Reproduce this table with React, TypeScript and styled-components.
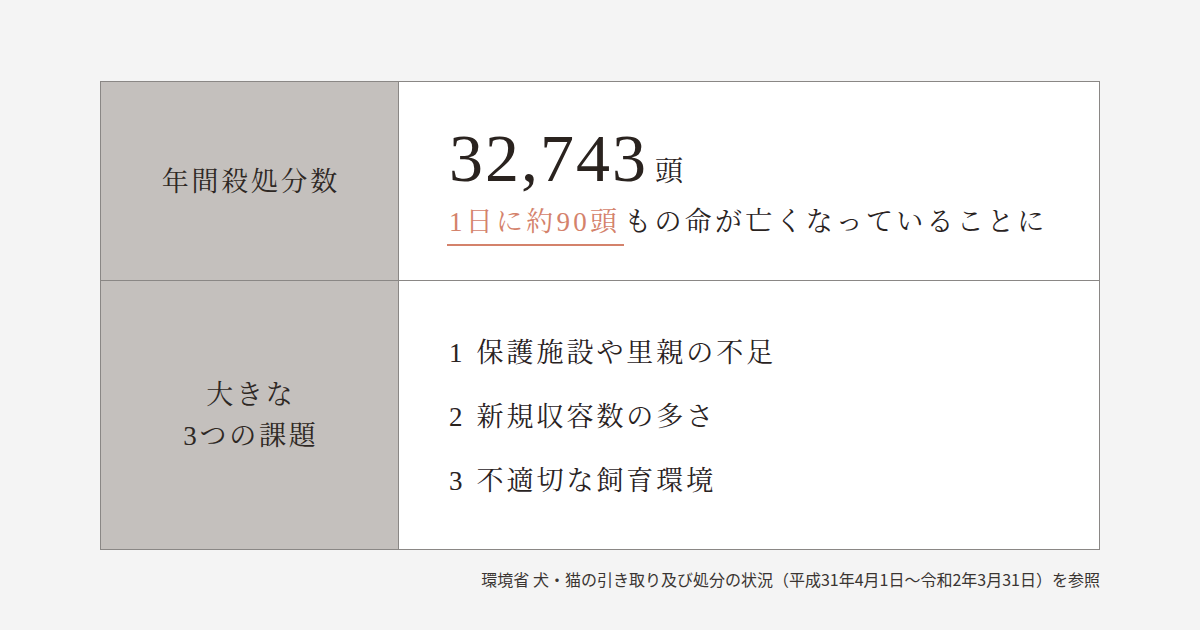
import React from 'react';
import styled, {createGlobalStyle} from 'styled-components';

const GlobalStyle = createGlobalStyle`
    html, body {
        margin: 0;
        padding: 0;
        background: #f4f4f4;
    }
`;

const serif = `"Liberation Serif", "Noto Serif CJK JP", "Noto Sans CJK JP", serif`;

const issues = [
    '保護施設や里親の不足',
    '新規収容数の多さ',
    '不適切な飼育環境',
];

const App = () => {
    return (
        <>
            <GlobalStyle/>
            <Page>
                <Table>
                    <HeadCell>
                        <HeadText>{'年間殺処分数'}</HeadText>
                    </HeadCell>
                    <BodyCell>
                        <StatBlock>
                            <CountRow>
                                <Count>{'32,743'}</Count>
                                <Unit>{'頭'}</Unit>
                            </CountRow>
                            <Lead>
                                <Accent>{'1日に約90頭'}</Accent>
                                {'もの命が亡くなっていることに'}
                            </Lead>
                        </StatBlock>
                    </BodyCell>
                    <HeadCell $last={true}>
                        <HeadText>
                            {'大きな'}
                            <br/>
                            {'3つの課題'}
                        </HeadText>
                    </HeadCell>
                    <BodyCell $last={true}>
                        <IssueList>
                            {issues.map((issue, i) => (
                                <Issue key={issue}>
                                    <IssueNo>{i + 1}</IssueNo>
                                    {issue}
                                </Issue>
                            ))}
                        </IssueList>
                    </BodyCell>
                </Table>
                <Source>
                    {'環境省 犬・猫の引き取り及び処分の状況（平成31年4月1日〜令和2年3月31日）を参照'}
                </Source>
            </Page>
        </>
    );
};

const Page = styled.div`
    width: 1200px;
    height: 630px;
    box-sizing: border-box;
    padding: 81px 100px 0;
    display: flex;
    flex-direction: column;
    color: #2a231f;
`;

const Table = styled.div`
    display: grid;
    grid-template-columns: 298px 1fr;
    grid-template-rows: 199px 268px;
    border: 1px solid #8a8785;
`;

const HeadCell = styled.div<{$last?: boolean}>`
    background: #c4c0bd;
    border-right: 1px solid #8a8785;
    border-bottom: ${(p) => (p.$last ? 'none' : '1px solid #8a8785')};
    display: flex;
    align-items: center;
    justify-content: center;
`;

const HeadText = styled.div`
    font-family: ${serif};
    font-size: 27px;
    line-height: 41px;
    letter-spacing: 0.1em;
    text-align: center;
    padding-left: 0.1em;
    margin-top: 2px;
    color: #2e2824;
`;

const BodyCell = styled.div<{$last?: boolean}>`
    background: #fff;
    border-bottom: ${(p) => (p.$last ? 'none' : '1px solid #8a8785')};
    display: flex;
    align-items: center;
    padding-left: 50px;
`;

const StatBlock = styled.div`
    display: flex;
    flex-direction: column;
    margin-top: 10px;
`;

const CountRow = styled.div`
    display: flex;
    align-items: baseline;
    gap: 7px;
`;

const Count = styled.span`
    font-family: ${serif};
    font-size: 68px;
    line-height: 64px;
    letter-spacing: 2px;
    color: #2a231f;
`;

const Unit = styled.span`
    font-family: ${serif};
    font-size: 28px;
`;

const Lead = styled.div`
    font-family: ${serif};
    font-size: 27px;
    line-height: 40px;
    letter-spacing: 0.12em;
    margin-top: 12px;
    color: #2a231f;
`;

const Accent = styled.span`
    color: #d4826b;
    display: inline-block;
    border-bottom: 2px solid #d4826b;
    padding: 0 4px 2px 2px;
    margin-left: -2px;
`;

const IssueList = styled.ol`
    list-style: none;
    margin: 0;
    padding: 0;
    display: flex;
    flex-direction: column;
    gap: 24px;
    margin-top: 4px;
`;

const Issue = styled.li`
    font-family: ${serif};
    font-size: 27px;
    line-height: 40px;
    letter-spacing: 0.11em;
`;

const IssueNo = styled.span`
    margin-right: 14px;
    letter-spacing: 0;
`;

const Source = styled.div`
    align-self: flex-end;
    margin-top: 17px;
    font-family: "Noto Sans CJK JP", "Liberation Sans", sans-serif;
    font-size: 16px;
    color: #3a3532;
`;

export default App;
